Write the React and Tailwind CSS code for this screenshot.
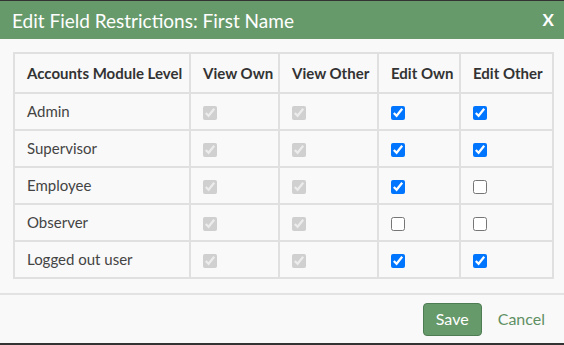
import React from 'react';

const rows = [
  { name: 'Admin', editOwn: true, editOther: true },
  { name: 'Supervisor', editOwn: true, editOther: true },
  { name: 'Employee', editOwn: true, editOther: false },
  { name: 'Observer', editOwn: false, editOther: false },
  { name: 'Logged out user', editOwn: true, editOther: true },
];

const Box = ({ checked, disabled }) => (
  <input
    type="checkbox"
    defaultChecked={checked}
    disabled={disabled}
    className="m-0 w-[14px] h-[14px] align-middle"
  />
);

export default function App() {
  return (
    <div
      className="w-[564px] h-[345px] bg-[#333] pt-px pb-[2px] flex flex-col"
      style={{ fontFamily: 'Lato, sans-serif' }}
    >
      {/* Title bar */}
      <div className="h-[38px] bg-[#679a6b] flex items-center justify-between pl-3 pr-[10px] text-white">
        <span className="text-[19px] leading-none">Edit Field Restrictions: First Name</span>
        <span className="text-[17px] font-bold">X</span>
      </div>

      {/* Body */}
      <div className="flex-1 bg-[#f9f9f9] flex flex-col">
        <div className="px-[13px] pt-[13px] pb-[14px] border-b-2 border-[#e3e3e3]">
          <table className="border-collapse table-fixed w-[539px] text-[15px] text-[#444]">
            <colgroup>
              <col className="w-[176px]" />
              <col className="w-[89px]" />
              <col className="w-[99px]" />
              <col className="w-[82px]" />
              <col className="w-[93px]" />
            </colgroup>
            <thead>
              <tr className="h-[40px]">
                {['Accounts Module Level', 'View Own', 'View Other', 'Edit Own', 'Edit Other'].map((h) => (
                  <th key={h} className="border-2 border-[#e0e0e0] px-3 text-left font-bold text-[#333] whitespace-nowrap">
                    {h}
                  </th>
                ))}
              </tr>
            </thead>
            <tbody>
              {rows.map((r) => (
                <tr key={r.name} className="h-[37px]">
                  <td className="border-2 border-[#e0e0e0] px-3">{r.name}</td>
                  <td className="border-2 border-[#e0e0e0] px-3"><Box checked disabled /></td>
                  <td className="border-2 border-[#e0e0e0] px-3"><Box checked disabled /></td>
                  <td className="border-2 border-[#e0e0e0] px-3"><Box checked={r.editOwn} /></td>
                  <td className="border-2 border-[#e0e0e0] px-3"><Box checked={r.editOther} /></td>
                </tr>
              ))}
            </tbody>
          </table>
        </div>

        {/* Footer */}
        <div className="flex-1 flex items-center justify-end pr-[7px] gap-1">
          <button className="h-[33px] w-[59px] rounded bg-[#679a6b] border border-[#4f7d53] text-white text-[16px]">
            Save
          </button>
          <button className="h-[33px] px-3 text-[#5f9064] text-[16px]">Cancel</button>
        </div>
      </div>
    </div>
  );
}
